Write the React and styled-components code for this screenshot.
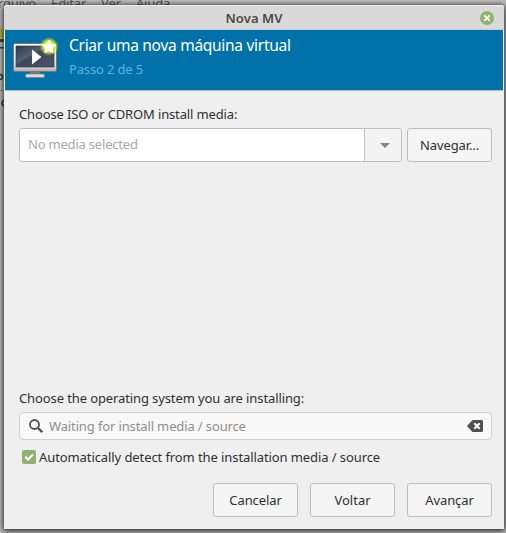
import React from 'react';
import styled, { createGlobalStyle } from 'styled-components';

const GlobalStyle = createGlobalStyle`
  * { box-sizing: border-box; }
  body { margin: 0; overflow: hidden; }
`;

const Desktop = styled.div`
  position: relative;
  width: 506px;
  height: 533px;
  padding: 5px 2px 4px 4px;
  overflow: hidden;
  background: #bdbdbd;
  font-family: 'Noto Sans', 'Open Sans', sans-serif;
  font-size: 13px;
  color: #303030;
`;

const MenuBehind = styled.div`
  position: absolute;
  top: -5px;
  left: -2px;
  display: flex;
  gap: 15px;
  font-size: 13px;
  line-height: 16px;
  letter-spacing: -0.15px;
  color: #555;
`;

const ToolbarBehind = styled.svg`
  position: absolute;
  left: 0;
  top: 0;
`;

const Dialog = styled.main`
  position: relative;
  display: flex;
  flex-direction: column;
  width: 500px;
  height: 524px;
  background: #efefef;
  border-radius: 3px 3px 0 0;
  box-shadow: 0 0 5px 1px rgba(0, 0, 0, 0.45), 0 2px 6px rgba(0, 0, 0, 0.6);
`;

const TitleBar = styled.header`
  display: grid;
  grid-template-columns: 1fr auto 1fr;
  align-items: center;
  height: 25px;
  padding: 0 10px 0 9px;
  background: #d9d9d9;
  border-top: 1px solid #f0f0f0;
  border-bottom: 1px solid #ccc8c5;
  border-radius: 3px 3px 0 0;
`;

const Title = styled.h1`
  grid-column: 2;
  margin: 1px 0 0 1px;
  font-size: 13px;
  font-weight: 600;
  line-height: 18px;
  letter-spacing: ${(p) => p.$track}px;
  color: #4a4a4a;
`;

const CloseButton = styled.button`
  justify-self: end;
  width: 14px;
  height: 14px;
  padding: 0;
  border: 0;
  background: none;
  display: flex;
`;

const Banner = styled.section`
  display: flex;
  height: 61px;
  margin: 0 1px;
  padding: 4px 0 0 8px;
  background: #0072a9;
  border-bottom: 1px solid #b9b9b9;
`;

const BannerText = styled.div`
  margin-left: 10px;
  white-space: nowrap;
`;

const Heading = styled.h2`
  margin: 0;
  font-size: 15.5px;
  font-weight: 400;
  line-height: 22px;
  letter-spacing: ${(p) => p.$track}px;
  color: #fff;
`;

const Step = styled.p`
  margin: 4px 0 0;
  font-size: 13px;
  line-height: 18px;
  letter-spacing: ${(p) => p.$track}px;
  color: #62b1dd;
`;

const Content = styled.section`
  flex: 1;
  display: flex;
  flex-direction: column;
  padding: 13px 12px 12px 15px;
`;

const Label = styled.span`
  line-height: 20px;
  white-space: nowrap;
  letter-spacing: ${(p) => p.$track}px;
  color: ${(p) => p.$color || '#303030'};
`;

const MediaRow = styled.div`
  display: flex;
  gap: 5px;
  margin-top: 4px;
`;

const Combo = styled.div`
  display: flex;
  width: 383px;
  height: 34px;
  border: 1px solid #bfbfbf;
  border-radius: 3px;
  background: #fff;
`;

const ComboText = styled.div`
  flex: 1;
  padding: 5px 8px;
`;

const ComboArrow = styled.div`
  display: flex;
  align-items: center;
  justify-content: center;
  width: 37px;
  padding-left: 4px;
  background: #f4f4f4;
  border-left: 1px solid #c4c4c4;
  border-radius: 0 2px 2px 0;
`;

const Button = styled.button`
  width: 85px;
  height: 34px;
  padding: 0;
  border: 1px solid #bcbcbc;
  border-radius: 3px;
  background: #f5f5f5;
  font: inherit;
  color: #303030;
  letter-spacing: ${(p) => p.$track}px;
`;

const OsSection = styled.div`
  display: flex;
  flex-direction: column;
  margin-top: auto;
`;

const SearchField = styled.div`
  display: flex;
  align-items: center;
  height: 28px;
  margin-top: 4px;
  padding: 0 8px 0 9px;
  border: 1px solid #cfcfcf;
  border-radius: 4px;
  background: #f8f8f8;

  ${Label} {
    flex: 1;
    margin-left: 6px;
  }
`;

const CheckRow = styled.label`
  display: flex;
  align-items: center;
  gap: 3px;
  height: 20px;
  margin: 7px 0 0 3px;
`;

const Actions = styled.footer`
  display: flex;
  justify-content: flex-end;
  gap: 12px;
  margin-top: 16px;
`;

const MonitorIcon = () => (
  <svg width="46" height="45" viewBox="0 -1 46 45">
    <defs>
      <linearGradient id="screen" x1="0" y1="0" x2="1" y2="1">
        <stop offset="0" stopColor="#303946" />
        <stop offset="0.4" stopColor="#536073" />
        <stop offset="0.46" stopColor="#3c485b" />
        <stop offset="1" stopColor="#46536a" />
      </linearGradient>
      <linearGradient id="frame" x1="0" y1="0" x2="0" y2="1">
        <stop offset="0" stopColor="#fff" />
        <stop offset="0.8" stopColor="#ddd" />
        <stop offset="1" stopColor="#aaa" />
      </linearGradient>
      <radialGradient id="glow">
        <stop offset="0" stopColor="#fcff48" />
        <stop offset="0.6" stopColor="#e2ee20" stopOpacity="0.95" />
        <stop offset="1" stopColor="#b5d51c" stopOpacity="0" />
      </radialGradient>
    </defs>
    <path d="M17 36h10v4H17z" fill="#777" />
    <rect x="12.500" y="39" width="19" height="3.5" rx="1.5" fill="#ddd" stroke="#7c7c7c" strokeWidth=".6" />
    <rect x=".5" y="8.500" width="43" height="28" rx="1.5" fill="url(#frame)" stroke="#777" />
    <rect x="3" y="11" width="38" height="21" fill="url(#screen)" stroke="#252d38" strokeWidth=".6" />
    <path d="M19 14.500v15l9.500-7.500z" fill="#fff" />
    <circle cx="36" cy="11.500" r="9.500" fill="url(#glow)" />
    <path
      d="M36 5l2 4.300 4.700.6-3.500 3.200.9 4.700-4.100-2.300-4.100 2.300.9-4.700-3.500-3.200 4.700-.6z"
      fill="#fff"
      stroke="#fff"
      strokeLinejoin="round"
    />
  </svg>
);

const CloseIcon = () => (
  <svg width="14" height="14" viewBox="0 0 14 14">
    <circle cx="7" cy="7" r="7" fill="#8fb36d" />
    <path d="M4.300 4.300l5.400 5.400M9.700 4.300L4.300 9.700" stroke="#fff" strokeWidth="1.9" />
  </svg>
);

const SearchIcon = () => (
  <svg width="14" height="14" viewBox="0 0 14 14" fill="none" stroke="#505050">
    <circle cx="5.500" cy="5.500" r="4.500" strokeWidth="1.8" />
    <path d="M8.800 8.800l4.400 4.400" strokeWidth="2.3" />
  </svg>
);

const ClearIcon = () => (
  <svg width="16" height="12" viewBox="0 0 16 12">
    <path d="M0 6L5 .6Q5.600 0 6.400 0H14.500Q16 0 16 1.500v9Q16 12 14.500 12H6.400Q5.600 12 5 11.400z" fill="#505050" />
    <path d="M7.300 3.300l5.400 5.400M12.700 3.300L7.300 8.700" stroke="#fff" strokeWidth="2" />
  </svg>
);

const CheckIcon = () => (
  <svg width="14" height="14" viewBox="0 0 14 14">
    <rect width="14" height="14" rx="2" fill="#8fb36d" />
    <path d="M3.300 6.800l2.700 2.700 5-5" fill="none" stroke="#fff" strokeWidth="2.2" />
  </svg>
);

const ArrowIcon = () => (
  <svg width="10" height="5" viewBox="0 0 10 5">
    <path d="M0 0h10L5 5z" fill="#858585" />
  </svg>
);

export default function App() {
  return (
    <>
      <GlobalStyle />
      <Desktop>
        <MenuBehind>
          <span>rquivo</span>
          <span>Editar</span>
          <span>Ver</span>
          <span>Ajuda</span>
        </MenuBehind>
        <ToolbarBehind width="6" height="120" viewBox="0 0 6 120">
          <circle cx="0" cy="33" r="5" fill="#b0b23c" />
          <path d="M0 39h5v3H0zM0 47h5v1.500H0z" fill="#444" />
          <circle cx="0" cy="77" r="2.5" fill="none" stroke="#333" strokeWidth="1.3" />
          <path d="M0 90.500h6" stroke="#888" />
          <path d="M5 100a3 3 0 1 0 0 6" fill="none" stroke="#222" strokeWidth="1.3" />
        </ToolbarBehind>
        <Dialog>
          <TitleBar>
            <Title $track={0.1}>Nova MV</Title>
            <CloseButton aria-label="Fechar">
              <CloseIcon />
            </CloseButton>
          </TitleBar>
          <Banner>
            <MonitorIcon />
            <BannerText>
              <Heading $track={-0.28}>Criar uma nova máquina virtual</Heading>
              <Step $track={-0.15}>Passo 2 de 5</Step>
            </BannerText>
          </Banner>
          <Content>
            <Label $track={-0.14}>Choose ISO or CDROM install media:</Label>
            <MediaRow>
              <Combo>
                <ComboText>
                  <Label $track={-0.2} $color="#a9a9a9">No media selected</Label>
                </ComboText>
                <ComboArrow>
                  <ArrowIcon />
                </ComboArrow>
              </Combo>
              <Button $track={-0.1}>Navegar...</Button>
            </MediaRow>
            <OsSection>
              <Label $track={-0.11}>Choose the operating system you are installing:</Label>
              <SearchField>
                <SearchIcon />
                <Label $track={-0.13} $color="#8e8e8e">Waiting for install media / source</Label>
                <ClearIcon />
              </SearchField>
              <CheckRow>
                <CheckIcon />
                <Label $track={-0.09}>Automatically detect from the installation media / source</Label>
              </CheckRow>
            </OsSection>
            <Actions>
              <Button $track={-0.1}>Cancelar</Button>
              <Button $track={0}>Voltar</Button>
              <Button $track={-0.1}>Avançar</Button>
            </Actions>
          </Content>
        </Dialog>
      </Desktop>
    </>
  );
}
